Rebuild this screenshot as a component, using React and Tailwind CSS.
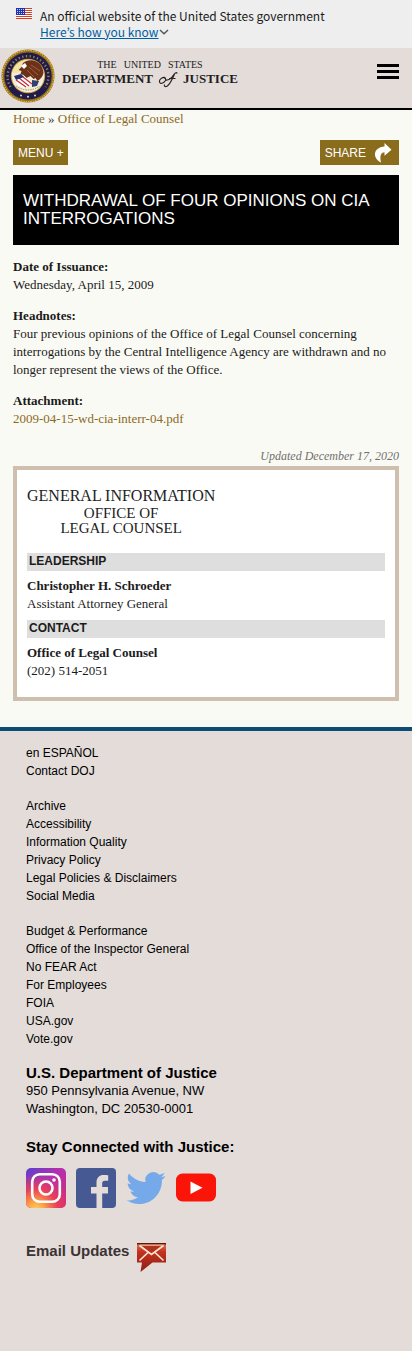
import React from "react";

const SERIF = "font-['Liberation_Serif',serif]";
const SANS = "font-['Liberation_Sans',sans-serif]";

function Flag() {
  return (
    <svg className="h-[11px] w-4 shrink-0" viewBox="0 0 16 11" aria-hidden="true">
      <rect width="16" height="11" fill="#fff" />
      {[0, 2, 4, 6, 8, 10].map((y) => (
        <rect key={y} y={y} width="16" height="1" fill="#db3e1f" />
      ))}
      <rect width="9" height="7" fill="#1e33b1" />
      {[1, 3, 5].map((y) =>
        [1, 3, 5, 7].map((x) => <rect key={`${x}-${y}`} x={x} y={y} width="1" height="1" fill="#c9cff2" />)
      )}
    </svg>
  );
}

function Seal() {
  return (
    <svg className="size-[54px] shrink-0" viewBox="0 0 54 54" role="img" aria-label="Seal">
      <circle cx="27" cy="27" r="26.5" fill="#8d6a1c" />
      <circle cx="27" cy="27" r="25.6" fill="none" stroke="#d9b23c" strokeWidth="1.4" strokeDasharray="1.6 0.8" />
      <circle cx="27" cy="27" r="23.6" fill="#1f1b4d" />
      <path d="M9.500 38A20.400 20.400 0 1 1 44.500 38" fill="none" stroke="#9a7f48" strokeWidth="2.400" strokeDasharray="1.300 2.400" />
      <circle cx="27" cy="27" r="17.2" fill="#c9a13a" />
      <circle cx="27" cy="27" r="16.2" fill="#f3ecd6" />
      <path d="M11.500 24C13 16 19 11 27 11c6 0 12 4 15 9l-4-3-1 6-6-1-4 4-6-4-5 2z" fill="#f5e3a4" />
      <path d="M22 14c3-3 9-4 14-1 4 2 6 6 6.500 11-1 4-3 6-6 8l-2-3-2 1-3-3-4 2-3-3-3-1 1-3-3-1 3-3 1.500-4z" fill="#6b3119" />
      <path d="M20 17l4-3 2 3-3 3z" fill="#fff" />
      <path d="M28 18l9 8M30 16l9 6M26 21l7 7" stroke="#a4603a" strokeWidth="1" />
      <path d="M14 30l9-3 10 8-10 4-6-3z" fill="#fff" />
      <path d="M15 31l10 7M18 29l10 8M22 28l9 7" stroke="#c5303a" strokeWidth="1.300" />
      <path d="M13 27l7-2 3 3-8 3z" fill="#24306f" />
      <path d="M31 31l7 1-2 5-5 1z" fill="#31406f" />
      <path d="M12 33q15 14 30 0-4 9-15 10-11-1-15-10z" fill="#f4efdf" />
      <path d="M15 37q12 8 24 0" fill="none" stroke="#94824f" strokeWidth="0.900" strokeDasharray="1.500 1" />
      <circle cx="20" cy="46.500" r="1" fill="#e6d9a0" />
      <circle cx="27" cy="47.700" r="1" fill="#e6d9a0" />
      <circle cx="34" cy="46.500" r="1" fill="#e6d9a0" />
    </svg>
  );
}

function Instagram() {
  return (
    <svg className="size-10" viewBox="0 0 40 40" aria-hidden="true">
      <defs>
        <linearGradient id="ig-base" x1="0" y1="0" x2="1" y2="1">
          <stop offset="0" stopColor="#5b3fd0" />
          <stop offset="0.450" stopColor="#b52fae" />
          <stop offset="1" stopColor="#cf2a78" />
        </linearGradient>
        <radialGradient id="ig-warm" cx="0.250" cy="1.050" r="0.900">
          <stop offset="0" stopColor="#ffd45c" />
          <stop offset="0.250" stopColor="#fba044" />
          <stop offset="0.600" stopColor="#ee3f55" stopOpacity="0.900" />
          <stop offset="1" stopColor="#ee3f55" stopOpacity="0" />
        </radialGradient>
      </defs>
      <rect width="40" height="40" rx="5" fill="url(#ig-base)" />
      <rect width="40" height="40" rx="5" fill="url(#ig-warm)" />
      <rect x="6.200" y="6.200" width="27.600" height="27.600" rx="7.500" fill="none" stroke="#fff" strokeWidth="2.600" />
      <circle cx="20" cy="20" r="6.500" fill="none" stroke="#fff" strokeWidth="2.600" />
      <circle cx="28" cy="12" r="1.800" fill="#fff" />
    </svg>
  );
}

function Facebook() {
  return (
    <svg className="size-10" viewBox="0 0 40 40" aria-hidden="true">
      <rect width="40" height="40" rx="4" fill="#475993" />
      <path d="M20.500 40V25.500H15V19h5.500v-4.500c0-5 3-7.500 7-7.500 2 0 4 .2 4.700.3v5.500h-3.200c-2.300 0-2.800 1.200-2.800 2.800V19h5.800v6.500h-5.800V40z" fill="#e3dcd9" />
    </svg>
  );
}

function Twitter() {
  return (
    <svg className="size-10" viewBox="0 0 40 40" aria-hidden="true">
      <path
        d="M39.500 7.900c-1.400.6-3 1.100-4.600 1.300 1.700-1 2.900-2.600 3.500-4.500-1.500.9-3.300 1.600-5.100 2A8.100 8.100 0 0 0 19.500 14C12.800 13.700 6.900 10.500 2.900 5.600c-2.200 3.700-1 8.400 2.500 10.700-1.300 0-2.600-.4-3.700-1 0 3.800 2.600 7.200 6.500 8-1.200.3-2.400.4-3.600.1 1 3.200 4 5.500 7.500 5.600A16.300 16.300 0 0 1 .5 32.300 23 23 0 0 0 12.900 36c15 0 23.500-12.700 23-24.100 1.400-1.100 2.700-2.500 3.600-4z"
        fill="#76a9ea"
      />
    </svg>
  );
}

function YouTube() {
  return (
    <svg className="size-10" viewBox="0 0 40 40" aria-hidden="true">
      <rect y="5.500" width="40" height="28" rx="6.500" fill="#fb1509" />
      <path d="M14.500 13.500v12.500l12-6.200z" fill="#fff" />
    </svg>
  );
}

function MailIcon() {
  return (
    <svg className="h-[30px] w-[29px]" viewBox="0 0 29 30" aria-hidden="true">
      <defs>
        <linearGradient id="mail-red" x1="0" y1="0" x2="0" y2="1">
          <stop offset="0" stopColor="#e07a5a" />
          <stop offset="0.300" stopColor="#c2331f" />
          <stop offset="1" stopColor="#8f1d17" />
        </linearGradient>
      </defs>
      <path d="M0 0h29v19.500H15.500L3.500 29 5 19.500H0z" fill="url(#mail-red)" />
      <path d="M0 .7h29" stroke="#5c1712" strokeWidth="1.400" />
      <path d="M3 2.500h23L14.500 11z" fill="#b3301e" />
      <path d="M2.500 2.500l12 9 12-9M2.500 17.500l8.500-8M26.500 17.500l-8.500-8" fill="none" stroke="#fbe6d0" strokeWidth="1.700" />
      <path d="M2.500 2.200h24" stroke="#f5c9a8" strokeWidth="1" />
    </svg>
  );
}

function Field({ label, children }) {
  return (
    <div>
      <h2 className="font-bold">{label}</h2>
      {children}
    </div>
  );
}

function LinkList({ items }) {
  return (
    <ul>
      {items.map((item) => (
        <li key={item}>
          <a href="#">{item}</a>
        </li>
      ))}
    </ul>
  );
}

const SOCIAL = [
  ["Instagram", Instagram],
  ["Facebook", Facebook],
  ["Twitter", Twitter],
  ["YouTube", YouTube],
];

export default function App() {
  return (
    <div className={`${SERIF} min-h-screen bg-[#e3dcd9] text-[13px] leading-[18px] text-[#1b1b1b]`}>
      <section className="flex gap-2 bg-[#eeeeee] px-4 pt-2 pb-2 font-['Noto_Sans_CJK_KR',sans-serif] text-xs leading-4">
        <Flag />
        <div>
          <p>An official website of the United States government</p>
          <button type="button" className="flex items-center text-[#005ea2]">
            <span className="underline">Here’s how you know</span>
            <svg className="h-2 w-3" viewBox="0 0 12 8" aria-hidden="true">
              <path d="M2 2l4 3.800L10 2" fill="none" stroke="#4a5560" strokeWidth="1.400" />
            </svg>
          </button>
        </div>
      </section>

      <header className="flex items-start justify-between border-b-2 border-black bg-[#e3dcd9] pr-[13px] pb-[5px]">
        <a href="#" className="flex items-start gap-1 pt-px pl-px text-[#221c1e]">
          <Seal />
          <span className="flex flex-col items-center pt-[11px] pl-[3px]">
            <span className="flex gap-[7px] text-[10px] leading-[10px]">
              <span>THE</span>
              <span>UNITED</span>
              <span>STATES</span>
            </span>
            <span className="flex items-center gap-1 text-[13px] leading-[14px] font-bold">
              <span>DEPARTMENT</span>
              <svg className="h-[18px] w-[22px]" viewBox="0 0 22 18" role="img" aria-label="of">
                <path
                  d="M8.500 7.500C5 7 2 9.500 2.500 12s4.500 1.200 5.800-1.200c.8-1.600.2-3-1.200-2.700M8.500 10c3.500.5 6.500-2.500 8-5 1-2 3-3 3.700-1.600M17.500 4.200C15.500 8 13.500 14 10 16.200c-1.700 1-3.500-.2-2.200-1.600M12 8.500h6.500"
                  fill="none"
                  stroke="#2b2425"
                  strokeWidth="1.200"
                />
              </svg>
              <span>JUSTICE</span>
            </span>
          </span>
        </a>
        <button type="button" aria-label="Open menu" className="mt-4 flex flex-col gap-[3px]">
          <span className="h-[3px] w-[22px] bg-black" />
          <span className="h-[3px] w-[22px] bg-black" />
          <span className="h-[3px] w-[22px] bg-black" />
        </button>
      </header>

      <main className="bg-[#fafaf4] px-[13px] pb-[26px]">
        <nav aria-label="Breadcrumb" className="text-[#8a6a1f]">
          <a href="#">Home</a> <span className="text-[#333]">»</span> <a href="#">Office of Legal Counsel</a>
        </nav>

        <div className={`${SANS} mt-3 flex justify-between text-xs leading-[18px] text-white`}>
          <button type="button" className="h-[25px] bg-[#8a6c1d] pr-1 pl-[5px]">
            MENU +
          </button>
          <button type="button" className="flex h-[25px] items-center gap-2 bg-[#8a6c1d] pr-[7px] pl-[5px]">
            SHARE
            <svg className="h-5 w-[18px]" viewBox="0 0 18 20" aria-hidden="true">
              <path d="M10.500 0L17.500 6.800l-7 6V9.300C7 9.500 5.500 12.500 7 19.500 3 17.500.5 14 1 10.500 1.500 6 6 3.800 10.500 3.500z" fill="#fff" />
            </svg>
          </button>
        </div>

        <h1 className={`${SANS} mt-[10px] bg-black px-[10px] py-[17px] text-[17px] text-white`}>
          WITHDRAWAL OF FOUR OPINIONS ON CIA INTERROGATIONS
        </h1>

        <div className="mt-[13px] flex flex-col gap-[13px]">
          <Field label="Date of Issuance:">
            <p>Wednesday, April 15, 2009</p>
          </Field>
          <Field label="Headnotes:">
            <p>
              Four previous opinions of the Office of Legal Counsel concerning interrogations by the Central
              Intelligence Agency are withdrawn and no longer represent the views of the Office.
            </p>
          </Field>
          <Field label="Attachment:">
            <a href="#" className="text-[#8a6a1f]">
              2009-04-15-wd-cia-interr-04.pdf
            </a>
          </Field>
        </div>

        <p className="mt-[19px] pb-px text-right text-xs leading-[18px] text-[#707070] italic">
          Updated December 17, 2020
        </p>

        <aside className="border-4 border-[#cebfae] bg-white px-[10px] pt-4 pb-[17px]">
          <div className="w-fit text-center text-[#222]">
            <h2 className="text-base leading-5">GENERAL INFORMATION</h2>
            <p className="text-[15px] leading-[15px]">
              OFFICE OF
              <br />
              LEGAL COUNSEL
            </p>
          </div>
          <h3 className={`${SANS} mt-[17px] bg-[#dedede] px-[2px] pb-[2px] text-xs leading-4 font-bold`}>LEADERSHIP</h3>
          <p className="mt-[6px] font-bold">Christopher H. Schroeder</p>
          <p>Assistant Attorney General</p>
          <h3 className={`${SANS} mt-[7px] bg-[#dedede] px-[2px] pb-[2px] text-xs leading-4 font-bold`}>CONTACT</h3>
          <p className="mt-[6px] font-bold">Office of Legal Counsel</p>
          <p>(202) 514-2051</p>
        </aside>
      </main>

      <footer className={`${SANS} border-t-4 border-[#0b4d75] px-[26px] pt-[13px] pb-[76px] text-xs leading-[18px] text-black`}>
        <div className="flex flex-col gap-[17px]">
          <LinkList items={["en ESPAÑOL", "Contact DOJ"]} />
          <LinkList
            items={[
              "Archive",
              "Accessibility",
              "Information Quality",
              "Privacy Policy",
              "Legal Policies & Disclaimers",
              "Social Media",
            ]}
          />
          <LinkList
            items={[
              "Budget & Performance",
              "Office of the Inspector General",
              "No FEAR Act",
              "For Employees",
              "FOIA",
              "USA.gov",
              "Vote.gov",
            ]}
          />
        </div>
        <address className="mt-4 text-[13px] not-italic">
          <strong className="block text-[15px]">U.S. Department of Justice</strong>
          950 Pennsylvania Avenue, NW
          <br />
          Washington, DC 20530-0001
        </address>
        <h2 className="mt-5 text-[15px] font-bold">Stay Connected with Justice:</h2>
        <ul className="mt-3 flex gap-[10px]">
          {SOCIAL.map(([name, Icon]) => (
            <li key={name}>
              <a href="#" aria-label={name} className="block">
                <Icon />
              </a>
            </li>
          ))}
        </ul>
        <a href="#" className="mt-[35px] flex items-start gap-2 text-[15px] leading-4 font-bold text-[#3b3333]">
          Email Updates
          <MailIcon />
        </a>
      </footer>
    </div>
  );
}
